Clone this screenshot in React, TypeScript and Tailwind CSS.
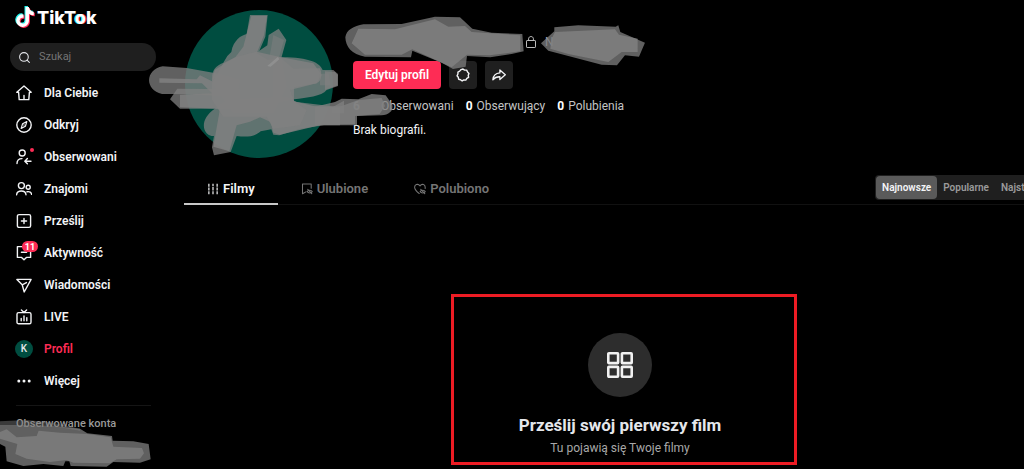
import type { ReactNode } from 'react'
import { FaTiktok } from 'react-icons/fa6'
import { Search } from 'lucide-react'

interface NavItem {
    label: string;
    icon: ReactNode;
    active?: boolean;
    dot?: boolean;
    badge?: string;
}

function Icon({ children, className = 'size-4' }: { children: ReactNode; className?: string }) {
    return (
        <svg
            viewBox="0 0 16 16"
            className={className}
            fill="none"
            stroke="currentColor"
            strokeWidth="1.4"
            strokeLinecap="round"
            strokeLinejoin="round"
            aria-hidden="true"
        >
            {children}
        </svg>
    )
}

const navItems: NavItem[] = [
    {
        label: 'Dla Ciebie',
        icon: <Icon><path d="M8 1 .8 7.2H2.6L3.2 14.6H12.8L13.4 7.2H15.2ZM8 10.4v4" /></Icon>,
    },
    {
        label: 'Odkryj',
        icon: <Icon><circle cx="8" cy="8" r="7.2" /><path strokeWidth="1.2" d="M10.8 4.6 9.4 9.3 5.2 11.4 6.6 6.7Z" /><path d="M8 8v.1" /></Icon>,
    },
    {
        label: 'Obserwowani',
        dot: true,
        icon: <Icon><circle cx="6.2" cy="4" r="3" /><path d="M1 14.6C1 11.6 3 9.6 6 9.6M15 12.2H9M11.4 9.6 8.8 12.2 11.4 14.8" /></Icon>,
    },
    {
        label: 'Znajomi',
        icon: <Icon><circle cx="5.4" cy="4.6" r="3" /><circle cx="12.2" cy="6.2" r="2" /><path d="M.6 13.8C.8 11.4 2.7 10 5.3 10S9.8 11.4 10 13.8M11 10.8C13.6 10.2 15.4 11.4 15.6 13.4" /></Icon>,
    },
    {
        label: 'Prześlij',
        icon: <Icon><rect x="1.4" y="1.6" width="13.2" height="12.8" rx="1.6" /><path d="M8 5.4v5.2M5.4 8h5.2" /></Icon>,
    },
    {
        label: 'Aktywność',
        badge: '11',
        icon: <Icon><path d="M1.4 1.6H14.6V12.4H10.4L8 14.8 5.6 12.4H1.4ZM5.4 7.2H10.6" /></Icon>,
    },
    {
        label: 'Wiadomości',
        icon: <Icon><path d="M.9 2.4H15.1L8.2 15 6.2 7.8ZM6.2 7.8 10.4 5.6" /></Icon>,
    },
    {
        label: 'LIVE',
        icon: <Icon><rect x="1" y="3.6" width="14" height="11.2" rx="1.6" /><path d="M5.4 1 8 3.4 10.6 1M5.2 9.4v2.4M8 7v4.8M10.8 8.6v3.2" /></Icon>,
    },
    {
        label: 'Profil',
        active: true,
        icon: <span className="flex size-[18px] shrink-0 items-center justify-center rounded-full bg-[#004d40] text-[10px] font-medium text-gray-200">K</span>,
    },
    {
        label: 'Więcej',
        icon: (
            <Icon>
                <g fill="currentColor" stroke="none">
                    <circle cx="2.8" cy="8" r="1.5" /><circle cx="8" cy="8" r="1.5" /><circle cx="13.2" cy="8" r="1.5" />
                </g>
            </Icon>
        ),
    },
]

const slashedBadge = (
    <>
        <path d="M8.2 11.4C9.4 9 13.8 9 15 11.4 13.8 13.8 9.4 13.8 8.2 11.4Z" />
        <path d="M9 8.4 14.4 14.2" />
    </>
)

const tabs = [
    {
        label: 'Filmy',
        icon: <Icon className="size-3"><path strokeWidth="1.6" strokeLinecap="butt" d="M2.5 1v4M2.5 6v4M2.5 11v4M8 1v3M8 5v5M8 11v4M13.5 1v4M13.5 6v4M13.5 11v4" /></Icon>,
    },
    {
        label: 'Ulubione',
        icon: <Icon className="size-3"><path d="M13.6 7V1.4H2V14.4L6.6 11.8" />{slashedBadge}</Icon>,
    },
    {
        label: 'Polubiono',
        icon: <Icon className="size-3"><path d="M14.8 7.4C15.8 1.6 10.4.4 8 3.8 5.4.2 0 2 1 6.8 1.6 9.6 4.4 12 7 14" />{slashedBadge}</Icon>,
    },
]

const sortOptions = ['Najnowsze', 'Popularne', 'Najstarsze']

function Logo() {
    return (
        <a href="#" className="flex h-6 items-center gap-[3px] pl-1.5 text-white">
            <span className="relative h-5 w-[18px]">
                <FaTiktok className="absolute -top-0.5 -left-0.5 size-5 text-[#25f4ee]" />
                <FaTiktok className="absolute top-0 left-0 size-5 text-[#fe2c55]" />
                <FaTiktok className="absolute -top-px -left-px size-5" />
            </span>
            <span className="font-['Inter',sans-serif] text-lg leading-6 font-extrabold">
                TikT<span className="[text-shadow:-1px_0_#25f4ee,1px_0_#fe2c55]">o</span>k
            </span>
        </a>
    )
}

function Sidebar() {
    return (
        <aside className="w-[184px] shrink-0 pt-1.5 pl-2.5">
            <Logo />
            <label className="mt-[13px] flex h-7 w-[146px] items-center gap-2 rounded-full bg-[#1f1f1f] px-2">
                <Search size={13} strokeWidth={2} className="shrink-0 text-gray-200" />
                <input
                    type="search"
                    aria-label="Szukaj"
                    placeholder="Szukaj"
                    className="w-full min-w-0 bg-transparent text-[11px] outline-none placeholder:text-[#757575]"
                />
            </label>

            <nav className="mt-1.5">
                {navItems.map((item) => (
                    <a
                        key={item.label}
                        href="#"
                        className={`flex h-8 items-center text-xs font-semibold ${item.active ? 'text-[#fe2c55]' : 'text-gray-100'}`}
                    >
                        <span className="relative mr-1.5 flex w-7 justify-center">
                            {item.icon}
                            {item.dot && <span className="absolute -top-px right-1 size-1 rounded-full bg-[#fe2c55]" />}
                            {item.badge && (
                                <span className="absolute -top-1 left-3 flex h-[11px] w-4 items-center justify-center rounded-full bg-[#fe2c55] text-[9px] font-bold text-white">
                                    {item.badge}
                                </span>
                            )}
                        </span>
                        {item.label}
                    </a>
                ))}
            </nav>

            <div className="mt-2 ml-1.5 w-[135px] border-t border-[#151515] pt-2.5">
                <h2 className="text-[11px] leading-4 font-medium text-[#9a9a9a]">Obserwowane konta</h2>
            </div>
        </aside>
    )
}

function Stat({ value, label }: { value: string; label: string }) {
    return (
        <span className="flex gap-1 text-[#c4c4c4]">
            <strong className="font-bold text-white">{value}</strong>
            {label}
        </span>
    )
}

function ProfileHeader() {
    return (
        <header className="flex gap-5 pt-2.5 pl-px">
            <div className="size-[148px] shrink-0 rounded-full bg-[#004d40]" />
            <div className="pt-[21px]">
                <div className="flex h-[22px] items-center gap-2">
                    <span className="w-[164px]" />
                    <svg viewBox="0 0 12 14" className="h-3.5 w-3 text-[#bdbdbd]" fill="none" stroke="currentColor" aria-hidden="true">
                        <rect x="1.5" y="5.5" width="9" height="7" rx=".6" />
                        <path d="M3.6 5.5V3.8C3.6.8 8.4.8 8.4 3.8V5.5" />
                    </svg>
                    <span className="text-xs text-gray-400">N</span>
                </div>
                <div className="mt-2 flex gap-2">
                    <button className="h-7 w-[88px] rounded-sm bg-[#fe2c55] text-xs font-semibold text-white">Edytuj profil</button>
                    <button aria-label="Ustawienia" className="flex size-7 items-center justify-center rounded-sm bg-[#1f1f1f] text-gray-100">
                        <Icon className="size-3.5">
                            <path strokeWidth="1.6" d="M8 1.2 9.8 2.4 12.2 2.4 13.2 4.6 14.8 6.2 14 8.2 14.4 10.6 12.4 11.8 11.2 13.8 9 13.6 7 14.8 5.2 13.4 3 12.8 2.6 10.6 1.2 8.8 2.2 6.8 2.2 4.6 4.2 3.6 5.8 1.8Z" />
                        </Icon>
                    </button>
                    <button aria-label="Udostępnij" className="flex size-7 items-center justify-center rounded-sm bg-[#1f1f1f] text-gray-100">
                        <Icon className="size-3.5">
                            <path strokeWidth="1.5" d="M9 2.2 15.2 7.8 9 13.2V10C5.8 9.8 3.2 10.8 1 13.4 1.4 8.8 4.4 6 9 5.6Z" />
                        </Icon>
                    </button>
                </div>
                <div className="mt-2 flex gap-3 text-xs leading-[18px]">
                    <span className="flex text-[#c4c4c4]">
                        <span className="w-7 font-bold">6</span>
                        Obserwowani
                    </span>
                    <Stat value="0" label="Obserwujący" />
                    <Stat value="0" label="Polubienia" />
                </div>
                <p className="mt-1.5 text-xs leading-[18px] text-gray-100">Brak biografii.</p>
            </div>
        </header>
    )
}

function VideoTabs() {
    return (
        <div className="mt-[15px] flex items-center justify-between border-b border-[#111]">
            <div role="tablist" className="flex">
                {tabs.map((tab, i) => (
                    <button
                        key={tab.label}
                        role="tab"
                        aria-selected={i === 0}
                        className={`-mb-px flex h-8 items-center gap-1 border-b-2 px-[23px] pt-0.5 text-[13px] font-semibold ${i === 0 ? 'border-[#c8c8c8] text-gray-100' : 'border-transparent text-[#757575]'}`}
                    >
                        {tab.icon}
                        {tab.label}
                    </button>
                ))}
            </div>
            <div className="mb-0.5 flex h-[25px] items-center rounded-sm bg-[#1f1f1f] p-px text-[10px] font-semibold">
                {sortOptions.map((option, i) => (
                    <button
                        key={option}
                        className={`h-full rounded-sm px-1.5 ${i === 0 ? 'bg-[#5a5a5a] text-gray-100' : 'text-[#9a9a9a]'}`}
                    >
                        {option}
                    </button>
                ))}
            </div>
        </div>
    )
}

function EmptyState() {
    return (
        <section className="relative mx-auto mt-32 flex w-[336px] flex-col items-center">
            <div className="flex size-16 items-center justify-center rounded-full bg-[#2d2d2d]">
                <svg viewBox="0 0 26 26" className="size-[26px]" fill="none" stroke="#f1f1f1" strokeWidth="2.6" aria-hidden="true">
                    <rect x="1.3" y="1.3" width="9.8" height="9.8" rx=".6" />
                    <rect x="14.9" y="1.3" width="9.8" height="9.8" rx=".6" />
                    <rect x="1.3" y="14.9" width="9.8" height="9.8" rx=".6" />
                    <rect x="14.9" y="14.9" width="9.8" height="9.8" rx=".6" />
                </svg>
            </div>
            <h1 className="mt-4 text-[17px] leading-6 font-bold text-gray-200">Prześlij swój pierwszy film</h1>
            <p className="mt-0.5 text-xs leading-[18px] text-[#a8a8a8]">Tu pojawią się Twoje filmy</p>
            <div className="pointer-events-none absolute -top-[39px] -right-[9px] -bottom-2 -left-px border-[3px] border-[#ed1c24]" />
        </section>
    )
}

// grey marker strokes drawn over the private data
function MarkerStrokes() {
    return (
        <svg viewBox="0 0 1024 469" className="pointer-events-none absolute top-0 left-0 h-[469px] w-[1024px]" fill="#808080" aria-hidden="true">
            <g transform="translate(140 0) scale(.3333)">
                <path opacity=".75" d="M68 199 140 204 240 222 300 240 290 290 130 282 66 282C14 270 14 210 68 199Z" />
                <path opacity=".75" d="M90 298 112 266 300 268V326H120Z" />
                <path opacity=".75" d="M400 172C500 168 540 186 548 210L580 210 594 222V258L560 270C545 290 500 292 463 298L400 310Z" />
                <path opacity=".75" d="M274 156C280 120 304 106 320 102L330 45H383L376 110 358 152 382 136 386 105 416 86 439 120 424 174 440 260 400 340 280 340 218 250C212 220 220 200 250 188L262 168Z" />
                <path opacity=".75" d="M224 326C190 350 184 380 200 400 210 410 220 408 222 408L216 442 222 466 272 456 290 408C320 412 345 410 362 394L394 388 400 404 418 406 480 386 552 376H600V322L470 306 440 290 260 300Z" />
                <path opacity=".85" d="M334 48H381L372 106 350 160 384 180 420 172 460 206 540 205C548 225 544 244 530 250L462 262V304L520 318 600 324V374L545 374 420 404 400 398 392 366 360 352 330 365 290 376 268 454 220 440 240 326 120 322V284L216 280 186 250 58 248V235L170 238 180 226 216 244 224 210 256 190 286 172 310 140Z" />
                <path opacity=".85" d="M250 190 286 172 350 155 424 172 520 190 545 225 530 250 450 270 462 304 500 330 480 376 400 386 380 350 330 350 250 350 216 300 216 250Z" />
                <path opacity=".5" d="M540 222 566 220 572 256 540 256ZM400 105 432 120 410 198 384 198Z" />
                <path opacity=".12" fill="#fff" d="M414 170 418 178 392 200 382 198Z" />
                <path d="M577 322 612 302V340H577Z" opacity=".75" />
            </g>
            <g transform="translate(335 10) scale(.3333)">
                <path opacity=".75" d="M85 43 200 42 300 20 375 22 412 56 470 68 562 72 566 124 530 132 466 142 396 138 392 170 354 177 320 158 232 122 228 142 90 140C50 134 32 110 31 82 34 60 56 48 85 43Z" />
                <path opacity=".85" d="M70 56 180 58 300 28 340 50 390 48 410 66 556 76V124L464 136 396 134 350 172 232 118 200 134 90 134 50 100Z" />
                <path opacity=".75" d="M618 100 658 64V52L730 46 842 50 850 46 856 66 930 98 912 140 870 136 846 166 800 164 640 122Z" />
                <path opacity=".85" d="M650 86 660 66 840 58 852 74 908 86V126L860 126 820 156 700 132 646 116Z" />
                <path opacity=".78" d="M-60 290 0 276 20 266 70 268 110 252 152 256 172 284C176 304 160 314 140 316L66 318V346H-60Z" />
                <path opacity=".8" d="M-60 292 20 288 70 270 140 264 150 288 134 312 60 318V342L-60 344Z" />
                <path opacity=".75" d="M-30 184 0 186 8 196V226L-30 240Z" />
            </g>
            <g transform="translate(0 300) scale(.3333)">
                <path opacity=".75" d="M0 376 60 376 160 378 240 386 262 400 336 408 338 422 400 424 446 432 452 478 420 488 340 486 320 500 212 498 208 484 196 484 190 498 130 492 70 498 20 484 16 440 0 432Z" />
                <path opacity=".8" d="M0 396 20 388 50 412 110 408 116 392 180 398 262 402 332 412 340 440 426 444 432 460 420 476 350 478 330 490 220 488 200 480 150 486 80 476 46 462 52 432 0 416Z" />
                <path opacity=".45" d="M0 364 80 360 160 368 240 386V392L160 378H0Z" />
            </g>
        </svg>
    )
}

export default function App() {
    return (
        <div className="relative flex min-h-screen overflow-hidden bg-black font-['Roboto',sans-serif]">
            <Sidebar />
            <main className="min-w-[872px] flex-1">
                <ProfileHeader />
                <VideoTabs />
                <EmptyState />
            </main>
            <MarkerStrokes />
        </div>
    )
}
